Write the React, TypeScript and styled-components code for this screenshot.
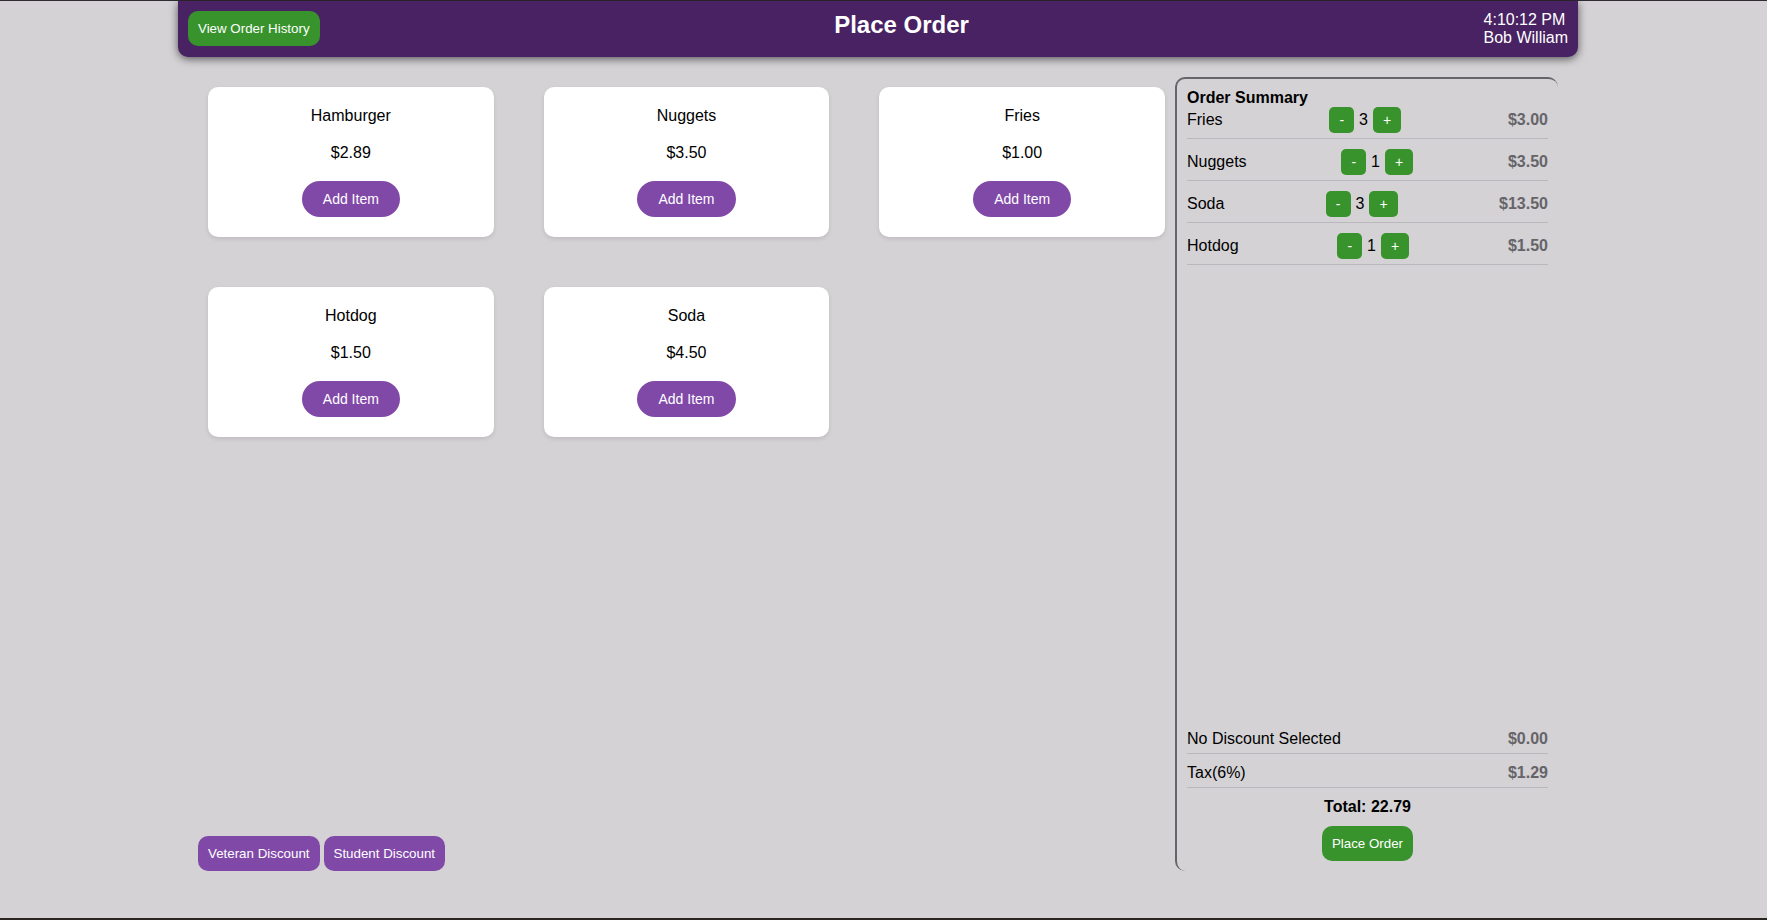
import React from "react";
import styled, { createGlobalStyle } from "styled-components";

const colors = {
  page: "#d4d2d5",
  header: "#482263",
  purple: "#8049a8",
  green: "#38932c",
  muted: "#656469",
  line: "#b9b8bc",
};

const GlobalStyle = createGlobalStyle`
  *, *::before, *::after {
    box-sizing: border-box;
  }
  body {
    margin: 0;
    background: ${colors.page};
    color: #000;
    font-family: "Liberation Sans", Arial, sans-serif;
    font-size: 16px;
    line-height: 18px;
  }
  button {
    font-family: inherit;
  }
  h1, h2, p, ul {
    margin: 0;
    padding: 0;
  }
`;

const Page = styled.div`
  display: flex;
  flex-direction: column;
  align-items: center;
  min-height: 100vh;
  padding-right: 11px;
  border-top: 1px solid #2f2b31;
  border-bottom: 2px solid #2b2521;
`;

const Header = styled.header`
  display: flex;
  justify-content: space-between;
  align-items: flex-start;
  width: 100%;
  max-width: 1400px;
  padding: 10px;
  border-radius: 0 0 10px 10px;
  background: ${colors.header};
  color: #fff;
  box-shadow: 0 2px 8px rgba(0, 0, 0, 0.6);
`;

const Title = styled.h1`
  font-size: 24px;
  line-height: 27px;
`;

const Session = styled.div`
  display: flex;
  flex-direction: column;
`;

const ActionButton = styled.button<{ $tone: "green" | "purple" }>`
  padding: 10px;
  border: 0;
  border-radius: 10px;
  background: ${({ $tone }) => colors[$tone]};
  color: #fff;
  cursor: pointer;
`;

const Main = styled.main`
  display: grid;
  grid-template-columns: minmax(0, 1fr) 383px;
  flex: 1;
  width: 100%;
  max-width: 1400px;
  padding: 20px 20px 47px;
`;

const Menu = styled.section`
  display: flex;
  flex-direction: column;
  justify-content: space-between;
`;

const MenuGrid = styled.div`
  display: grid;
  grid-template-columns: repeat(3, minmax(0, 1fr));
  gap: 50px;
  padding: 10px;
`;

const Card = styled.article`
  display: flex;
  flex-direction: column;
  align-items: center;
  gap: 19px;
  padding: 20px;
  border-radius: 10px;
  background: #fff;
  box-shadow: 0 2px 4px rgba(0, 0, 0, 0.1);
`;

const AddButton = styled.button`
  padding: 10px 21px;
  border: 0;
  border-radius: 20px;
  background: ${colors.purple};
  color: #fff;
  font-size: 14px;
  line-height: 16px;
  cursor: pointer;
`;

const Discounts = styled.div`
  display: flex;
  gap: 4px;
`;

const Summary = styled.aside`
  display: flex;
  flex-direction: column;
  justify-content: space-between;
  padding: 10px;
  border-top: 2px solid ${colors.muted};
  border-left: 2px solid ${colors.muted};
  border-radius: 10px;
`;

const SummaryTitle = styled.h2`
  font-size: 16px;
`;

const Lines = styled.ul`
  display: flex;
  flex-direction: column;
  gap: 10px;
  list-style: none;
`;

const Line = styled.li`
  display: flex;
  justify-content: space-between;
  align-items: center;
  padding-bottom: 5px;
  border-bottom: 1px solid ${colors.line};
`;

const Quantity = styled.div`
  display: flex;
  align-items: center;
  gap: 5px;
`;

const StepButton = styled.button`
  padding: 5px 10px;
  border: 0;
  border-radius: 5px;
  background: ${colors.green};
  color: #fff;
  font-size: 14px;
  line-height: 16px;
  cursor: pointer;
`;

const Price = styled.span`
  color: ${colors.muted};
  font-weight: bold;
`;

const Checkout = styled.div`
  display: flex;
  flex-direction: column;
  align-items: center;
  gap: 10px;

  ${Lines} {
    width: 100%;
  }
`;

const Total = styled.p`
  font-weight: bold;
`;

const menu = [
  { name: "Hamburger", price: 2.89 },
  { name: "Nuggets", price: 3.5 },
  { name: "Fries", price: 1 },
  { name: "Hotdog", price: 1.5 },
  { name: "Soda", price: 4.5 },
];

const order = [
  { name: "Fries", count: 3, cost: 3 },
  { name: "Nuggets", count: 1, cost: 3.5 },
  { name: "Soda", count: 3, cost: 13.5 },
  { name: "Hotdog", count: 1, cost: 1.5 },
];

const money = (value: number) => `$${value.toFixed(2)}`;

export default function App() {
  return (
    <>
      <GlobalStyle />
      <Page>
        <Header>
          <ActionButton type="button" $tone="green">View Order History</ActionButton>
          <Title>Place Order</Title>
          <Session>
            <span>4:10:12 PM</span>
            <span>Bob William</span>
          </Session>
        </Header>
        <Main>
          <Menu>
            <MenuGrid>
              {menu.map((item) => (
                <Card key={item.name}>
                  <p>{item.name}</p>
                  <p>{money(item.price)}</p>
                  <AddButton type="button">Add Item</AddButton>
                </Card>
              ))}
            </MenuGrid>
            <Discounts>
              <ActionButton type="button" $tone="purple">Veteran Discount</ActionButton>
              <ActionButton type="button" $tone="purple">Student Discount</ActionButton>
            </Discounts>
          </Menu>
          <Summary>
            <div>
              <SummaryTitle>Order Summary</SummaryTitle>
              <Lines>
                {order.map((line) => (
                  <Line key={line.name}>
                    <span>{line.name}</span>
                    <Quantity>
                      <StepButton type="button">-</StepButton>
                      <span>{line.count}</span>
                      <StepButton type="button">+</StepButton>
                    </Quantity>
                    <Price>{money(line.cost)}</Price>
                  </Line>
                ))}
              </Lines>
            </div>
            <Checkout>
              <Lines>
                <Line>
                  <span>No Discount Selected</span>
                  <Price>{money(0)}</Price>
                </Line>
                <Line>
                  <span>Tax(6%)</span>
                  <Price>{money(1.29)}</Price>
                </Line>
              </Lines>
              <Total>Total: 22.79</Total>
              <ActionButton type="button" $tone="green">Place Order</ActionButton>
            </Checkout>
          </Summary>
        </Main>
      </Page>
    </>
  );
}
